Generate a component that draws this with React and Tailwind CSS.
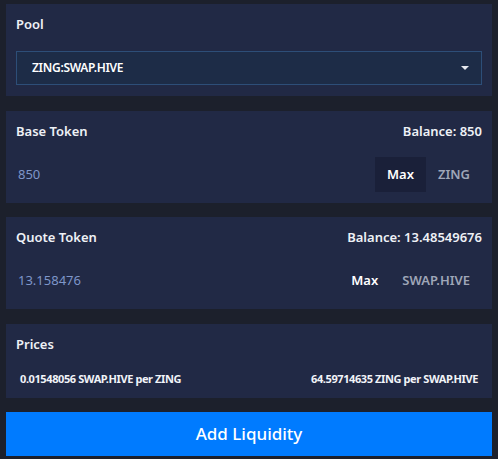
import React from "react";

const font = { fontFamily: '"Noto Sans", "Open Sans", sans-serif' };

const Panel = ({ className = "", children }) => (
  <section className={`bg-[#212945] px-[10px] ${className}`}>{children}</section>
);

const TokenPanel = ({ label, balance, value, symbol, maxActive }) => (
  <Panel className="pt-[12px] pb-[11px]">
    <div className="flex items-center justify-between h-[18px] text-[13px] font-semibold text-[#eef1f6]">
      <span>{label}</span>
      <span>Balance: {balance}</span>
    </div>
    <div className="flex items-center mt-[16px] h-[35px]">
      <span className="flex-1 pl-[2px] text-[13px] text-[#7e96c9]">{value}</span>
      <button
        className={`h-[35px] px-[12px] text-[13px] font-semibold text-white ${
          maxActive ? "bg-[#1a2039]" : ""
        }`}
      >
        Max
      </button>
      <span className="px-[12px] text-[13px] font-semibold text-[#9fa6b8]">{symbol}</span>
    </div>
  </Panel>
);

const App = () => {
  return (
    <div style={font} className="w-[498px] h-[459px] bg-[#1c202c] px-[6px] pt-[4px]">
      {/* pool select */}
      <Panel className="pt-[12px] pb-[11px]">
        <div className="h-[18px] flex items-center text-[13px] font-semibold text-[#eef1f6]">
          Pool
        </div>
        <div className="mt-[17px] h-[34px] flex items-center justify-between bg-[#1d2c47] border border-[#2d4e78] pl-[15px] pr-[12px]">
          <span className="text-[12px] font-semibold text-white tracking-[-0.3px]">ZING:SWAP.HIVE</span>
          <svg width="8" height="4" viewBox="0 0 8 4">
            <path d="M0 0h8L4 4z" fill="#e6e8ee" />
          </svg>
        </div>
      </Panel>

      <div className="mt-[15px]">
        <TokenPanel label="Base Token" balance="850" value="850" symbol="ZING" maxActive />
      </div>
      <div className="mt-[14px]">
        <TokenPanel label="Quote Token" balance="13.48549676" value="13.158476" symbol="SWAP.HIVE" />
      </div>

      {/* prices */}
      <Panel className="mt-[15px] pt-[12px] pb-[12px]">
        <div className="h-[18px] flex items-center text-[13px] font-semibold text-[#eef1f6]">
          Prices
        </div>
        <div className="mt-[18px] h-[14px] flex items-center justify-between px-[4px] text-[11px] font-bold text-[#f1f3f8] tracking-[-0.4px]">
          <span>0.01548056 SWAP.HIVE per ZING</span>
          <span>64.59714635 ZING per SWAP.HIVE</span>
        </div>
      </Panel>

      <button className="mt-[14px] w-full h-[44px] bg-[#007bff] text-white text-[17px] font-medium">
        Add Liquidity
      </button>
    </div>
  );
};

export default App;
